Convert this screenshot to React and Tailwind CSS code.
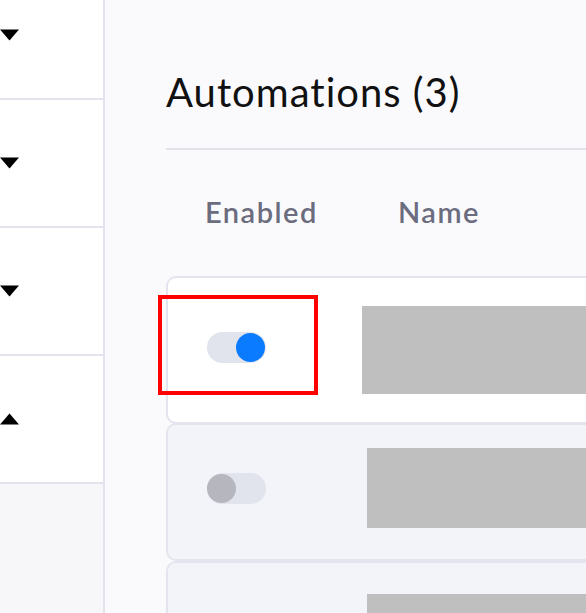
import React from "react";

function Caret({ up }) {
  return (
    <svg width="19" height="12" viewBox="0 0 19 12" className="block shrink-0">
      {up ? (
        <path d="M0 11.5 L9.5 0.5 L19 11.5 Z" fill="#000" />
      ) : (
        <path d="M0 0.5 L19 0.5 L9.5 11.5 Z" fill="#000" />
      )}
    </svg>
  );
}

function SideItem({ up, first }) {
  return (
    <div
      className={
        "h-[128px] shrink-0 border-b-2 border-[#e3e3ee] flex items-center " +
        (first ? "-mt-[28px]" : "")
      }
    >
      <Caret up={up} />
    </div>
  );
}

function Toggle({ on }) {
  return (
    <div className="relative w-[59px] h-[31px] rounded-full bg-[#e2e4ed]">
      <div
        className={
          "absolute top-[1px] w-[29px] h-[29px] rounded-full " +
          (on ? "right-[1px] bg-[#0a7bff]" : "left-0 bg-[#b5b6be]")
        }
      />
    </div>
  );
}

export default function App() {
  return (
    <div
      className="flex w-[586px] h-[613px] overflow-hidden bg-[#fafafd]"
      style={{ fontFamily: "Lato, 'Noto Sans', sans-serif" }}
    >
      <div className="w-[105px] shrink-0 flex flex-col bg-white border-r-2 border-[#e3e3ee]">
        <SideItem first />
        <SideItem />
        <SideItem />
        <SideItem up />
        <div className="flex-1 bg-[#f7f7fa]" />
      </div>
      <div className="flex-1 pl-[61px] flex flex-col">
        <div className="h-[150px] shrink-0 pt-[72px] border-b-2 border-[#e2e3ea]">
          <h1 className="text-[40px] leading-none text-[#111] tracking-[1px]">
            Automations (3)
          </h1>
        </div>
        <div className="h-[126px] shrink-0 flex items-center pb-[2px] text-[29px] font-semibold text-[#6b6c7d] tracking-[1.5px]">
          <span className="ml-[39px] w-[193px]">Enabled</span>
          <span>Name</span>
        </div>
        <div className="relative shrink-0">
          <div className="h-[148px] bg-white border-2 border-r-0 border-[#e3e4ee] rounded-l-[10px] flex items-center">
            <div className="ml-[39px] -mt-[6px]">
              <Toggle on />
            </div>
            <div className="ml-[96px] h-[88px] flex-1 bg-[#bfbfbf]" />
          </div>
          <div className="absolute left-[-8px] top-[19px] w-[160px] h-[100px] border-[4px] border-[#ff0000]" />
          <div className="h-[138px] -mt-[1px] bg-[#f3f4f9] border-2 border-r-0 border-[#e3e4ee] rounded-l-[10px] flex items-center">
            <div className="ml-[39px] -mt-[8px]">
              <Toggle />
            </div>
            <div className="ml-[101px] h-[80px] flex-1 bg-[#bfbfbf] -mt-[8px]" />
          </div>
          <div className="h-[138px] bg-[#f3f4f9] border-2 border-r-0 border-[#e3e4ee] rounded-l-[10px] flex items-start">
            <div className="ml-[199px] mt-[31px] h-[80px] flex-1 bg-[#bfbfbf]" />
          </div>
        </div>
      </div>
    </div>
  );
}
